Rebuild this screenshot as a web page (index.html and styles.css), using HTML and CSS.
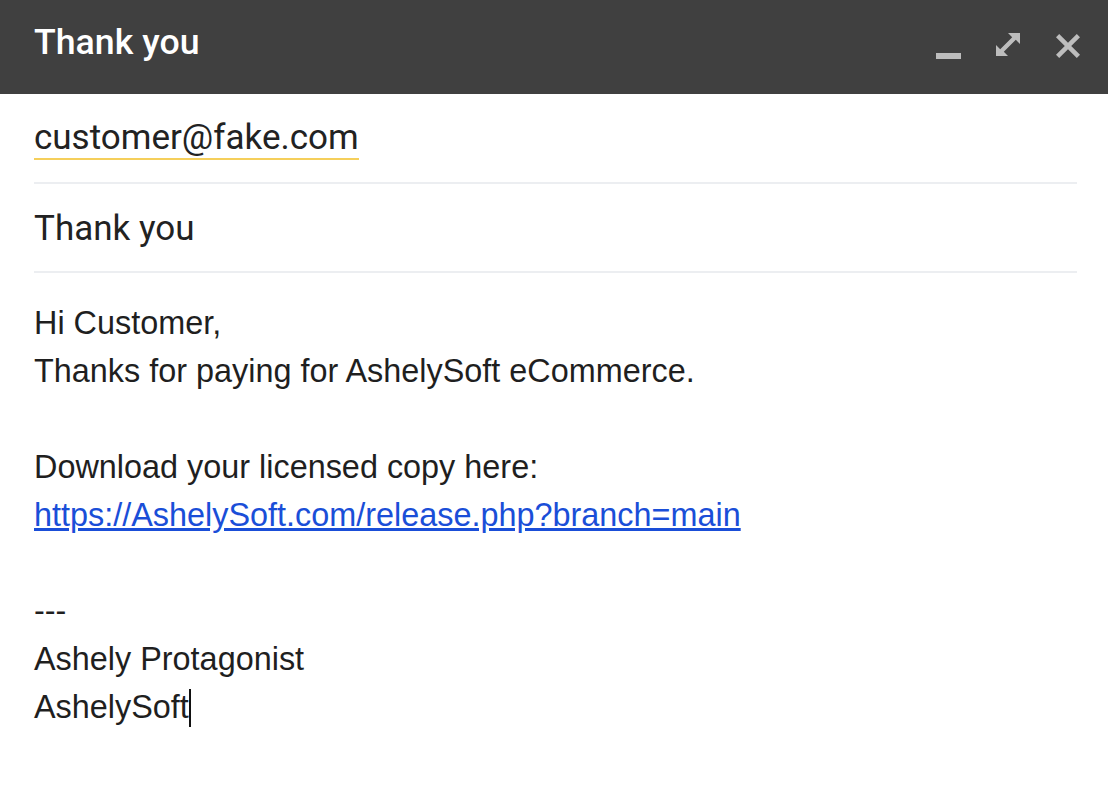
FILE: index.html
```html
<!DOCTYPE html>
<html>
<head>
<meta charset="utf-8">
<title>Thank you</title>
<link rel="stylesheet" href="styles.css">
</head>
<body>
<div class="compose">
  <header class="titlebar">
    <h1 class="title">Thank you</h1>
    <div class="controls">
      <svg class="icon icon-min" width="26" height="26" viewBox="0 0 26 26"><rect x="1" y="20" width="25" height="6" fill="#bdbdbd"/></svg>
      <svg class="icon icon-full" width="26" height="26" viewBox="0 0 26 26"><path d="M26 0v11l-4.2-4.2-12 12L14 23H2V12l4.2 4.2 12-12L14 0z" fill="#bdbdbd"/></svg>
      <svg class="icon icon-close" width="24" height="24" viewBox="0 0 24 24"><path d="M3.2 0l8.8 8.8 8.8-8.8 3.2 3.2-8.8 8.8 8.8 8.8-3.2 3.2-8.8-8.8-8.8 8.8-3.2-3.2 8.8-8.8-8.8-8.8z" fill="#bdbdbd"/></svg>
    </div>
  </header>
  <div class="field field-to">
    <span class="recipient">customer@fake.com</span>
  </div>
  <div class="field field-subject">Thank you</div>
  <div class="body">
    <div>Hi Customer,</div>
    <div>Thanks for paying for AshelySoft eCommerce.</div>
    <div><br></div>
    <div>Download your licensed copy here:</div>
    <div><a href="#">https://AshelySoft.com/release.php?branch=main</a></div>
    <div><br></div>
    <div>---</div>
    <div>Ashely Protagonist</div>
    <div>AshelySoft<span class="caret"></span></div>
  </div>
</div>
</body>
</html>
```
FILE: styles.css
```css
html, body {
  margin: 0;
  padding: 0;
  background: #ffffff;
}
.compose {
  width: 1108px;
  height: 788px;
  overflow: hidden;
}
.titlebar {
  height: 94px;
  background: #404040;
  display: flex;
  align-items: center;
  justify-content: space-between;
  padding: 0 28px 0 34px;
  box-sizing: border-box;
}
.title {
  margin: 0;
  font-family: Roboto, "Noto Sans", sans-serif;
  font-weight: 500;
  font-size: 35.7px;
  color: #ffffff;
  line-height: 40px;
  padding-bottom: 10px;
}
.controls {
  display: flex;
  align-items: center;
  gap: 33px;
  padding-bottom: 2px;
}
.icon { display: block; }
.icon-close { margin-left: 3px; }
.field {
  margin: 0 31px 0 34px;
  border-bottom: 2px solid #eceef1;
  font-family: Roboto, "Noto Sans", sans-serif;
  font-size: 35px;
  color: #222222;
  line-height: 40px;
}
.field-to {
  padding: 24px 0 22px;
}
.recipient {
  display: inline-block;
  border-bottom: 2px solid #f5cf5b;
}
.field-subject {
  padding: 25px 0 22px;
}
.body {
  padding: 26px 34px 0;
  font-family: "Liberation Sans", Arial, sans-serif;
  font-size: 32.4px;
  line-height: 48px;
  color: #1f1f1f;
}
.body a {
  color: #1a4ed8;
  text-decoration: underline;
}
.caret {
  display: inline-block;
  width: 2px;
  height: 38px;
  background: #111;
  vertical-align: -9px;
}
```
